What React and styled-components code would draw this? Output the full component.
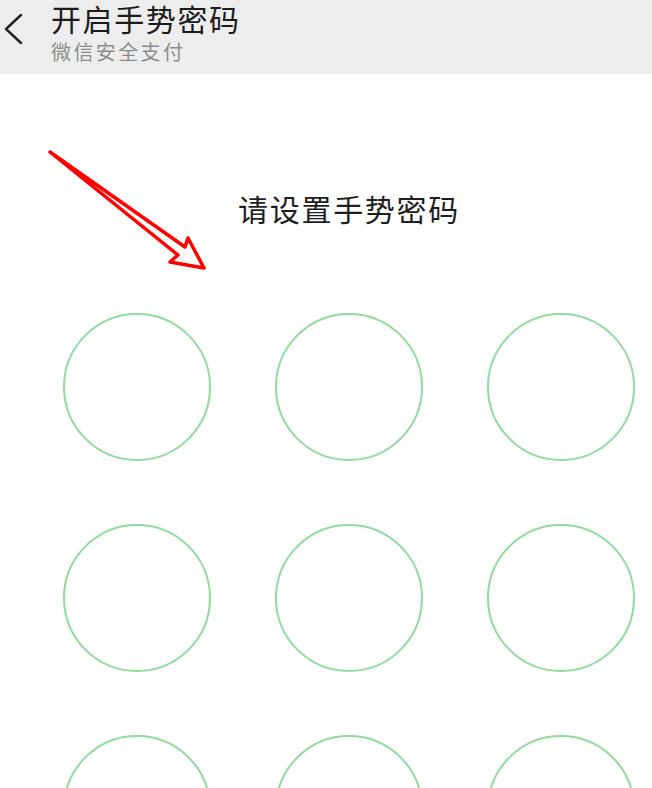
import React from "react";
import styled, { createGlobalStyle } from "styled-components";

const Global = createGlobalStyle`
  html, body { margin: 0; padding: 0; background: #fff; }
  body { width: 652px; height: 788px; overflow: hidden; font-family: "Noto Sans CJK SC", "Noto Sans", sans-serif; }
`;

const Page = styled.div`
  position: relative;
  width: 652px;
  height: 788px;
  overflow: hidden;
  background: #fff;
`;

const Header = styled.header`
  display: flex;
  align-items: flex-start;
  height: 74px;
  background: #ededed;
  box-sizing: border-box;
  padding: 2px 0 0 4px;
`;

const Back = styled.button`
  border: 0;
  background: none;
  padding: 0;
  margin-top: 12px;
  width: 20px;
  height: 30px;
  display: flex;
`;

const Titles = styled.div`
  display: flex;
  flex-direction: column;
  margin-left: 27px;
`;

const Title = styled.h1`
  margin: 0;
  font-size: 30px;
  line-height: 32px;
  font-weight: 400;
  letter-spacing: 1.6px;
  color: #1b1b1b;
`;

const Subtitle = styled.div`
  font-size: 20px;
  line-height: 24px;
  letter-spacing: 2.4px;
  color: #8c8c8c;
  margin-top: 6px;
`;

const Body = styled.main`
  width: 635px;
  box-sizing: border-box;
  padding-left: 63px;
  display: flex;
  flex-direction: column;
`;

const Prompt = styled.p`
  margin: 114px 0 0;
  text-align: center;
  font-size: 30px;
  line-height: 40px;
  letter-spacing: 1.7px;
  color: #1e1e1e;
`;

const Grid = styled.div`
  display: grid;
  grid-template-columns: repeat(3, 148px);
  grid-auto-rows: 148px;
  column-gap: 64px;
  row-gap: 63px;
  margin-top: 85px;
`;

const Dot = styled.div`
  width: 148px;
  height: 148px;
  box-sizing: border-box;
  border-radius: 50%;
  border: 2.6px solid #90dc9c;
`;

const Arrow = styled.svg`
  position: absolute;
  left: 0;
  top: 0;
  pointer-events: none;
`;

export default function App() {
  return (
    <Page>
      <Global />
      <Header>
        <Back aria-label="返回">
          <svg width="20" height="30" viewBox="0 0 20 30">
            <polyline points="17,1 2,15 17,29" fill="none" stroke="#222" strokeWidth="2.4" strokeLinecap="round" strokeLinejoin="round" />
          </svg>
        </Back>
        <Titles>
          <Title>开启手势密码</Title>
          <Subtitle>微信安全支付</Subtitle>
        </Titles>
      </Header>
      <Body>
        <Prompt>请设置手势密码</Prompt>
        <Grid>
          {Array.from({ length: 9 }).map((_, i) => (
            <Dot key={i} />
          ))}
        </Grid>
      </Body>
      <Arrow width="652" height="788" viewBox="0 0 652 788">
        <polygon
          points="50,152 185,247 188,238 204,268 170,262 178,255"
          fill="#fff"
          stroke="#ff0000"
          strokeWidth="3.5"
          strokeLinejoin="round"
        />
      </Arrow>
    </Page>
  );
}
